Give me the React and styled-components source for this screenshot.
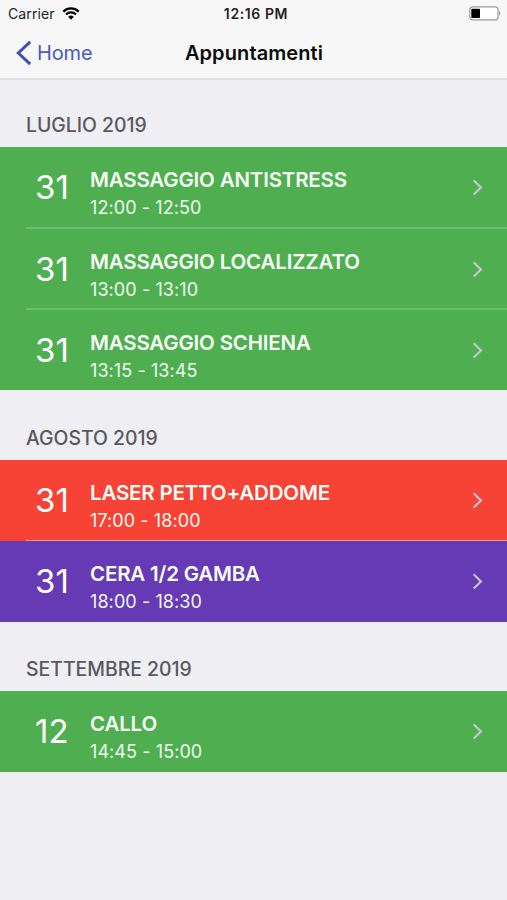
import styled, { createGlobalStyle } from "styled-components";

const sections = [
  {
    month: "LUGLIO 2019",
    headerHeight: 67,
    items: [
      { day: "31", title: "MASSAGGIO ANTISTRESS", time: "12:00 - 12:50", color: "#4faf50", height: 82, divider: 2 },
      { day: "31", title: "MASSAGGIO LOCALIZZATO", time: "13:00 - 13:10", color: "#4faf50", height: 81, divider: 2 },
      { day: "31", title: "MASSAGGIO SCHIENA", time: "13:15 - 13:45", color: "#4faf50", height: 80 },
    ],
  },
  {
    month: "AGOSTO 2019",
    headerHeight: 70,
    items: [
      { day: "31", title: "LASER PETTO+ADDOME", time: "17:00 - 18:00", color: "#f64336", height: 81, divider: 1 },
      { day: "31", title: "CERA 1/2 GAMBA", time: "18:00 - 18:30", color: "#673ab5", height: 81 },
    ],
  },
  {
    month: "SETTEMBRE 2019",
    headerHeight: 69,
    items: [{ day: "12", title: "CALLO", time: "14:45 - 15:00", color: "#4faf50", height: 81 }],
  },
];

function App() {
  return (
    <Screen>
      <GlobalStyle />
      <Header>
        <StatusBar>
          <Carrier>
            Carrier
            <WifiIcon />
          </Carrier>
          <Clock>12:16 PM</Clock>
          <BatteryIcon />
        </StatusBar>
        <NavBar>
          <BackButton>
            <svg width="17" height="26" viewBox="0 0 17 26" fill="none">
              <path d="M14.2 1.8 2.3 13l11.9 11.2" stroke="#3f51b5" strokeWidth="3" />
            </svg>
            <span>Home</span>
          </BackButton>
          <NavTitle>Appuntamenti</NavTitle>
        </NavBar>
      </Header>
      {sections.map((section) => (
        <section key={section.month}>
          <Month $height={section.headerHeight}>{section.month}</Month>
          {section.items.map((item) => (
            <Row key={item.title} $color={item.color} $height={item.height}>
              <RowInner $divider={item.divider}>
                <Day>{item.day}</Day>
                <Info>
                  <Title>{item.title}</Title>
                  <Time>{item.time}</Time>
                </Info>
                <Chevron width="12" height="18" viewBox="0 0 12 18" fill="none">
                  <path d="M1.7 2.2 9 9.4l-7.3 7.2" stroke="#c7c7cc" strokeWidth="2.1" />
                </Chevron>
              </RowInner>
            </Row>
          ))}
        </section>
      ))}
    </Screen>
  );
}

function WifiIcon() {
  return (
    <svg width="18" height="13" viewBox="0 0 18 13" fill="none">
      <path d="M1.3 4.6a11 11 0 0 1 15.4 0" stroke="#000" strokeWidth="2.2" />
      <path d="M4 7.4a7.1 7.1 0 0 1 10 0" stroke="#000" strokeWidth="2.1" />
      <path d="M6.2 9.8a4 4 0 0 1 5.6 0L9 12.7z" fill="#000" />
    </svg>
  );
}

function BatteryIcon() {
  return (
    <svg width="32" height="15" viewBox="0 0 32 15">
      <rect x="0.8" y="0.9" width="28.2" height="13" rx="3" fill="#fff" stroke="#9b9b9d" strokeWidth="1.2" />
      <rect x="2.3" y="2.8" width="8.7" height="9.2" rx="0.8" fill="#000" />
      <path d="M30 5.2c1.6.6 1.6 3.8 0 4.4z" fill="#9b9b9d" />
    </svg>
  );
}

// Styled Components
const GlobalStyle = createGlobalStyle`
  * {
    box-sizing: border-box;
  }

  body {
    margin: 0;
    background: #efeef3;
    font-family: Inter, "Liberation Sans", sans-serif;
  }
`;

const Screen = styled.div`
  width: 100%;
  height: 900px;
  overflow: hidden;
  background: #efeef3;
`;

const Header = styled.header`
  height: 80px;
  background: #f7f7f8;
  border-bottom: 2px solid #e0e0e3;
`;

const StatusBar = styled.div`
  display: grid;
  grid-template-columns: 1fr auto 1fr;
  align-items: center;
  height: 27px;
  padding: 0 6px 0 8px;
  color: #222;

  > svg {
    justify-self: end;
  }
`;

const Carrier = styled.div`
  display: flex;
  align-items: center;
  gap: 7px;
  font-size: 14px;
  letter-spacing: 0.1px;
`;

const Clock = styled.div`
  padding-left: 3px;
  font-size: 14px;
  font-weight: 600;
  letter-spacing: 0.6px;
`;

const NavBar = styled.nav`
  display: grid;
  grid-template-columns: 1fr auto 1fr;
  align-items: center;
  height: 51px;
  padding: 0 15px 0 16px;
`;

const BackButton = styled.div`
  display: flex;
  align-items: center;
  gap: 4px;
  color: #4a5abb;
  font-size: 20px;
  letter-spacing: -0.15px;
`;

const NavTitle = styled.h1`
  margin: 0;
  color: #0c0c0d;
  font-size: 20px;
  font-weight: 600;
  letter-spacing: 0.1px;
`;

const Month = styled.h2`
  display: flex;
  align-items: flex-end;
  height: ${({ $height }) => $height}px;
  margin: 0;
  padding: 0 0 10px 26px;
  color: #59595d;
  font-size: 19.4px;
  font-weight: 550;
  line-height: 24px;
`;

const Row = styled.article`
  height: ${({ $height }) => $height}px;
  padding-left: 26px;
  background: ${({ $color }) => $color};
  color: #fff;
`;

const RowInner = styled.div`
  display: flex;
  height: 100%;
  border-bottom: ${({ $divider = 0 }) => $divider}px solid
    rgba(255, 255, 255, ${({ $divider }) => ($divider === 1 ? 0.45 : 0.18)});
`;

const Day = styled.div`
  width: 64px;
  padding-left: 9px;
  font-size: 33px;
  line-height: 81px;
`;

const Info = styled.div`
  flex: 1;
  padding-top: 18px;
  white-space: nowrap;
`;

const Title = styled.h3`
  margin: 0;
  color: #f6fcf6;
  font-size: 20.5px;
  font-weight: 560;
  letter-spacing: -0.18px;
  line-height: 29px;
`;

const Time = styled.p`
  margin: 0;
  color: #f0f8f0;
  font-size: 18px;
  letter-spacing: 0.08px;
  line-height: 28px;
`;

const Chevron = styled.svg`
  margin: 31px 23px 0 0;
`;

export default App;
